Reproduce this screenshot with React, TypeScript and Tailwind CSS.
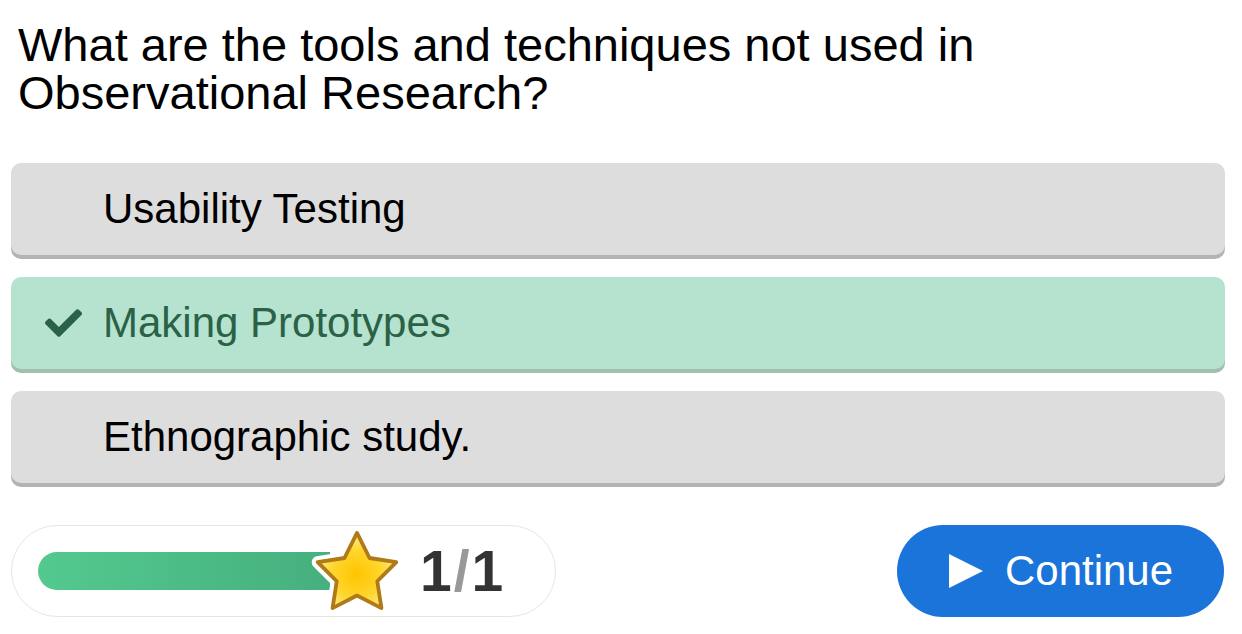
import React from "react";
import { FaCheck } from "react-icons/fa";

const font = { fontFamily: '"Liberation Sans", Arial, sans-serif' };

function Star() {
  const pts = "41,5 51.5,26 74,29.5 58,45.5 61.5,68 41,57.5 20.5,68 24,45.5 8,29.5 30.5,26";
  return (
    <svg width="98" height="93" viewBox="0 0 82 78" className="relative -ml-[22px] translate-y-[2px] shrink-0">
      <defs>
        <radialGradient id="sg" cx="50%" cy="55%" r="50%">
          <stop offset="0%" stopColor="#ffc400" />
          <stop offset="60%" stopColor="#ffd52a" />
          <stop offset="100%" stopColor="#ffe77a" />
        </radialGradient>
      </defs>
      <polygon points={pts} fill="#fff" stroke="#fff" strokeWidth="10" strokeLinejoin="round" />
      <polygon points={pts} fill="url(#sg)" stroke="#b07a18" strokeWidth="3.2" strokeLinejoin="round" />
    </svg>
  );
}

function Option({ label, selected }: { label: string; selected?: boolean }) {
  return (
    <div
      className={
        "h-[92px] rounded-[10px] flex items-center relative " +
        (selected
          ? "bg-[#b5e3cf] shadow-[0_4px_0_#a0bfb0] text-[#2b6146]"
          : "bg-[#dddddd] shadow-[0_4px_0_#b3b3b3] text-black")
      }
    >
      {selected && (
        <FaCheck className="absolute left-[34px] top-1/2 -translate-y-1/2 text-[#2b6146]" size={37} />
      )}
      <span className="pl-[92px] text-[42px] leading-none">{label}</span>
    </div>
  );
}

export default function App() {
  return (
    <div style={font} className="w-[1242px] h-[634px] bg-white px-[11px] pt-[21px] overflow-hidden">
      <h1 className="pl-[7px] text-[47px] leading-[48px] text-black font-normal">
        What are the tools and techniques not used in Observational Research?
      </h1>
      <div className="mt-[46px] flex flex-col gap-[22px] w-[1214px]">
        <Option label="Usability Testing" />
        <Option label="Making Prototypes" selected />
        <Option label="Ethnographic study." />
      </div>
      <div className="mt-[42px] flex items-center justify-between w-[1213px]">
        <div className="w-[545px] h-[92px] rounded-full border border-[#e6e6e6] flex items-center pl-[26px]">
          <div className="w-[292px] h-[38px] rounded-l-full bg-gradient-to-r from-[#53c98f] to-[#46b07e]" />
          <Star />
          <div className="ml-[14px] text-[57px] font-bold leading-none text-[#333333]">
            1<span className="text-[#999999] mx-[2px]">/</span>1
          </div>
        </div>
        <div className="w-[327px] h-[92px] rounded-full bg-[#1b74d9] flex items-center justify-center gap-[21px] text-white">
          <svg width="36" height="36" viewBox="0 0 36 36">
            <polygon points="1,1 35,18 1,35" fill="#fff" />
          </svg>
          <span className="text-[42px] leading-none">Continue</span>
        </div>
      </div>
    </div>
  );
}
